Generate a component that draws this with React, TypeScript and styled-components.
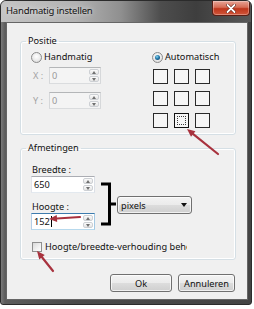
import React from 'react';
import styled, { createGlobalStyle, css } from 'styled-components';

const GlobalStyle = createGlobalStyle`
  html, body {
    margin: 0;
    padding: 0;
    background: #ffffff;
  }
  body {
    font-family: "Noto Sans", "Open Sans", sans-serif;
    font-size: 9.2px;
    color: #101010;
  }
  * {
    box-sizing: border-box;
  }
`;

const Page = styled.div`
  position: relative;
  width: 254px;
  height: 309px;
`;

const Window = styled.div`
  width: 252px;
  height: 305px;
  display: flex;
  flex-direction: column;
  border: 1px solid #2b2b2b;
  border-radius: 6px 6px 3px 3px;
  overflow: hidden;
  background: linear-gradient(90deg, #7a7a7a 0px, #5c5c5c 4px, #4a4a4a 30%, #444444 100%);
`;

const TitleBar = styled.div`
  height: 21px;
  flex: none;
  display: flex;
  align-items: flex-start;
  background: linear-gradient(
    90deg,
    #c4c4c4 0%,
    #b3b3b3 30%,
    #8f8f8f 48%,
    #4d4d4d 64%,
    #3e3e3e 78%,
    #585858 100%
  );
`;

const Title = styled.div`
  padding: 4px 0 0 5px;
  font-size: 9.5px;
  line-height: 12px;
  letter-spacing: -0.2px;
  color: #121212;
  text-shadow: 0 0 5px rgba(255, 255, 255, 0.85);
`;

const CloseButton = styled.div`
  margin-left: auto;
  margin-right: 1px;
  width: 38px;
  height: 15px;
  display: flex;
  align-items: center;
  justify-content: center;
  border: 1px solid #5b1e14;
  border-top: none;
  border-radius: 0 0 4px 4px;
  background: linear-gradient(180deg, #e8a597 0%, #d66c55 45%, #bf361c 55%, #d0563a 100%);
  box-shadow: inset 0 0 0 1px rgba(255, 255, 255, 0.3);
`;

const Client = styled.div`
  flex: 1;
  margin: 0 3px 4px 5px;
  padding: 12px 11px 0 13px;
  display: flex;
  flex-direction: column;
  background: #f0f0f0;
  border: 1px solid #666666;
`;

const Group = styled.fieldset<{ $gap?: number }>`
  margin: ${p => p.$gap ?? 0}px 0 0 0;
  min-width: 0;
  padding: 4px 10px 6px 10px;
  border: 1px solid #d5dfe5;
  border-radius: 3px;
  box-shadow: inset 0 0 0 1px #ffffff;
`;

const Legend = styled.legend`
  margin-left: -5px;
  padding: 0 2px;
  line-height: 12px;
`;

const PositieBody = styled.div`
  display: grid;
  grid-template-columns: 121px auto;
`;

const Column = styled.div`
  display: flex;
  flex-direction: column;
`;

const RadioRow = styled.label`
  height: 12px;
  display: flex;
  align-items: center;
  gap: 2px;
  line-height: 12px;
`;

const Radio = styled.span<{ $checked?: boolean }>`
  position: relative;
  flex: none;
  width: 11px;
  height: 11px;
  border-radius: 50%;
  border: 1px solid #8b8b8b;
  background: radial-gradient(circle at 50% 40%, #ffffff 0%, #e6e6e6 65%, #cfcfcf 100%);
  ${p =>
    p.$checked &&
    css`
      &::after {
        content: '';
        position: absolute;
        inset: 2px;
        border-radius: 50%;
        background: radial-gradient(circle at 40% 35%, #8ad8f2 0%, #2378aa 45%, #0c3658 100%);
      }
    `}
`;

const FieldRow = styled.div<{ $gap: number }>`
  margin-top: ${p => p.$gap}px;
  display: flex;
  align-items: center;
`;

const FieldLabel = styled.span<{ $disabled?: boolean }>`
  width: 18px;
  padding-left: 2px;
  color: ${p => (p.$disabled ? '#a3a3a3' : '#101010')};
`;

type SpinState = 'normal' | 'disabled' | 'focus';

const SpinBox = styled.div<{ $state: SpinState; $width: number }>`
  width: ${p => p.$width}px;
  height: 17px;
  flex: none;
  display: flex;
  align-items: stretch;
  border: 1px solid;
  background: ${p => (p.$state === 'disabled' ? '#f4f4f4' : '#ffffff')};
  border-color: ${p =>
    p.$state === 'focus'
      ? '#3d7bad #a4c9e3 #b7d9ed #b5cfe7'
      : p.$state === 'disabled'
      ? '#b4b6b8 #d6d8da #dadcde #d6d8da'
      : '#abadb3 #dbdfe6 #e3e9ef #e2e3ea'};
`;

const SpinValue = styled.div<{ $disabled?: boolean }>`
  flex: 1;
  display: flex;
  align-items: center;
  padding-left: 2px;
  color: ${p => (p.$disabled ? '#9a9a9a' : '#101010')};
`;

const Caret = styled.span`
  width: 1px;
  height: 11px;
  margin-left: 1px;
  background: #000000;
`;

const SpinButtons = styled.div`
  width: 11px;
  display: flex;
  flex-direction: column;
  gap: 1px;
  padding: 1px 1px 1px 0;
`;

const SpinButton = styled.div`
  flex: 1;
  display: flex;
  align-items: center;
  justify-content: center;
  border: 1px solid #cdd0d4;
  border-radius: 2px;
  background: linear-gradient(180deg, #fbfbfb 0%, #e4e4e4 100%);
`;

const SpinArrow = styled.span<{ $dir: 'up' | 'down' }>`
  width: 0;
  height: 0;
  border-left: 2.5px solid transparent;
  border-right: 2.5px solid transparent;
  ${p =>
    p.$dir === 'up'
      ? 'border-bottom: 3px solid #707070;'
      : 'border-top: 3px solid #707070;'}
`;

const AnchorGrid = styled.div`
  margin: 6px 0 0 1px;
  display: grid;
  grid-template-columns: repeat(3, 15px);
  grid-auto-rows: 15px;
  gap: 7px 6px;
`;

const AnchorCell = styled.div<{ $selected?: boolean }>`
  border: 1px solid #2a2a2a;
  background: #f6f6f6;
  padding: 2px;
  ${p =>
    p.$selected &&
    css`
      border-width: 1.5px;
      border-color: #111111;
    `}
`;

const FocusRect = styled.div`
  width: 100%;
  height: 100%;
  border: 1px dotted #3a3a3a;
`;

const SizeRow = styled.div`
  margin-top: 6px;
  display: flex;
  align-items: flex-end;
`;

const SizeLabel = styled.span<{ $gap?: number }>`
  margin-top: ${p => p.$gap ?? 0}px;
  height: 12px;
  line-height: 12px;
  padding-left: 1px;
`;

const Bracket = styled.svg`
  flex: none;
  margin: 0 0 4px 5px;
`;

const Dropdown = styled.div`
  width: 75px;
  height: 18px;
  margin: 0 0 16px 1px;
  padding: 0 4px 0 3px;
  display: flex;
  align-items: center;
  justify-content: space-between;
  border: 1px solid #707070;
  border-radius: 3px;
  background: linear-gradient(180deg, #f3f3f3 0%, #ebebeb 49%, #dddddd 50%, #cfcfcf 100%);
  box-shadow: inset 0 0 0 1px rgba(255, 255, 255, 0.7);
`;

const DropArrow = styled.span`
  width: 0;
  height: 0;
  border-left: 3px solid transparent;
  border-right: 3px solid transparent;
  border-top: 4px solid #111111;
`;

const CheckRow = styled.label`
  margin-top: 10px;
  height: 13px;
  padding-left: 1px;
  display: flex;
  align-items: center;
  gap: 3px;
`;

const CheckBox = styled.span`
  flex: none;
  width: 10px;
  height: 10px;
  border: 1px solid #8f8f8f;
  background: linear-gradient(135deg, #d9d9d9 0%, #f2f2f2 60%, #fdfdfd 100%);
`;

const CheckText = styled.span`
  width: 142px;
  overflow: hidden;
  white-space: nowrap;
`;

const ButtonRow = styled.div`
  margin: 14px 1px 0 0;
  display: flex;
  justify-content: flex-end;
  gap: 6px;
`;

const Button = styled.button<{ $width: number }>`
  width: ${p => p.$width}px;
  height: 18px;
  padding: 0;
  font: inherit;
  color: #101010;
  border: 1px solid #707070;
  border-radius: 3px;
  background: linear-gradient(180deg, #f3f3f3 0%, #ebebeb 49%, #dddddd 50%, #cfcfcf 100%);
  box-shadow: inset 0 0 0 1px rgba(255, 255, 255, 0.7);
`;

const Annotations = styled.svg`
  position: absolute;
  top: 0;
  left: 0;
  pointer-events: none;
`;

type Pt = [number, number];

const arrows: { tail: Pt; tip: Pt }[] = [
  { tail: [218, 154], tip: [187, 129] },
  { tail: [80, 217], tip: [49, 219] },
  { tail: [53, 271], tip: [37, 251] },
];

const arrowHead = (tail: Pt, tip: Pt) => {
  const dx = tip[0] - tail[0];
  const dy = tip[1] - tail[1];
  const len = Math.hypot(dx, dy);
  const ux = dx / len;
  const uy = dy / len;
  const bx = tip[0] - ux * 8;
  const by = tip[1] - uy * 8;
  const nx = -uy * 3.5;
  const ny = ux * 3.5;
  return {
    base: [bx, by] as Pt,
    points: `${tip[0]},${tip[1]} ${bx + nx},${by + ny} ${bx - nx},${by - ny}`,
  };
};

const Spin: React.FC<{ value: string; state?: SpinState; width: number; caret?: boolean }> = ({
  value,
  state = 'normal',
  width,
  caret,
}) => (
  <SpinBox $state={state} $width={width}>
    <SpinValue $disabled={state === 'disabled'}>
      {value}
      {caret && <Caret />}
    </SpinValue>
    <SpinButtons>
      <SpinButton>
        <SpinArrow $dir="up" />
      </SpinButton>
      <SpinButton>
        <SpinArrow $dir="down" />
      </SpinButton>
    </SpinButtons>
  </SpinBox>
);

const App: React.FC = () => {
  return (
    <Page>
      <GlobalStyle />
      <Window>
        <TitleBar>
          <Title>Handmatig instellen</Title>
          <CloseButton>
            <svg width="10" height="9" viewBox="0 0 10 9">
              <path d="M1.5 1 L8.5 8 M8.5 1 L1.5 8" stroke="#5a1a10" strokeWidth="3" strokeLinecap="round" />
              <path d="M1.5 1 L8.5 8 M8.5 1 L1.5 8" stroke="#ffffff" strokeWidth="1.8" strokeLinecap="round" />
            </svg>
          </CloseButton>
        </TitleBar>

        <Client>
          <Group>
            <Legend>Positie</Legend>
            <PositieBody>
              <Column>
                <RadioRow>
                  <Radio />
                  Handmatig
                </RadioRow>
                <FieldRow $gap={4}>
                  <FieldLabel $disabled>X :</FieldLabel>
                  <Spin value="0" state="disabled" width={52} />
                </FieldRow>
                <FieldRow $gap={8}>
                  <FieldLabel $disabled>Y :</FieldLabel>
                  <Spin value="0" state="disabled" width={52} />
                </FieldRow>
              </Column>
              <Column>
                <RadioRow>
                  <Radio $checked />
                  Automatisch
                </RadioRow>
                <AnchorGrid>
                  {Array.from({ length: 9 }).map((_, i) => (
                    <AnchorCell key={i} $selected={i === 7}>
                      {i === 7 && <FocusRect />}
                    </AnchorCell>
                  ))}
                </AnchorGrid>
              </Column>
            </PositieBody>
          </Group>

          <Group $gap={7}>
            <Legend>Afmetingen</Legend>
            <SizeRow>
              <Column>
                <SizeLabel>Breedte :</SizeLabel>
                <Spin value="650" width={64} />
                <SizeLabel $gap={8}>Hoogte :</SizeLabel>
                <Spin value="152" state="focus" width={64} caret />
              </Column>
              <Bracket width="16" height="44" viewBox="0 0 16 44">
                <path d="M1 2 H9.5 V42 H1 M9.5 22 H16" fill="none" stroke="#000000" strokeWidth="3" />
              </Bracket>
              <Dropdown>
                <span>pixels</span>
                <DropArrow />
              </Dropdown>
            </SizeRow>
            <CheckRow>
              <CheckBox />
              <CheckText>Hoogte/breedte-verhouding behouden</CheckText>
            </CheckRow>
          </Group>

          <ButtonRow>
            <Button $width={62}>Ok</Button>
            <Button $width={57}>Annuleren</Button>
          </ButtonRow>
        </Client>
      </Window>

      <Annotations width="254" height="309">
        {arrows.map(({ tail, tip }, i) => {
          const head = arrowHead(tail, tip);
          return (
            <g key={i}>
              <line
                x1={tail[0]}
                y1={tail[1]}
                x2={head.base[0]}
                y2={head.base[1]}
                stroke="#a8323e"
                strokeWidth="2.2"
                strokeLinecap="round"
              />
              <polygon points={head.points} fill="#a8323e" />
            </g>
          );
        })}
      </Annotations>
    </Page>
  );
};

export default App;
